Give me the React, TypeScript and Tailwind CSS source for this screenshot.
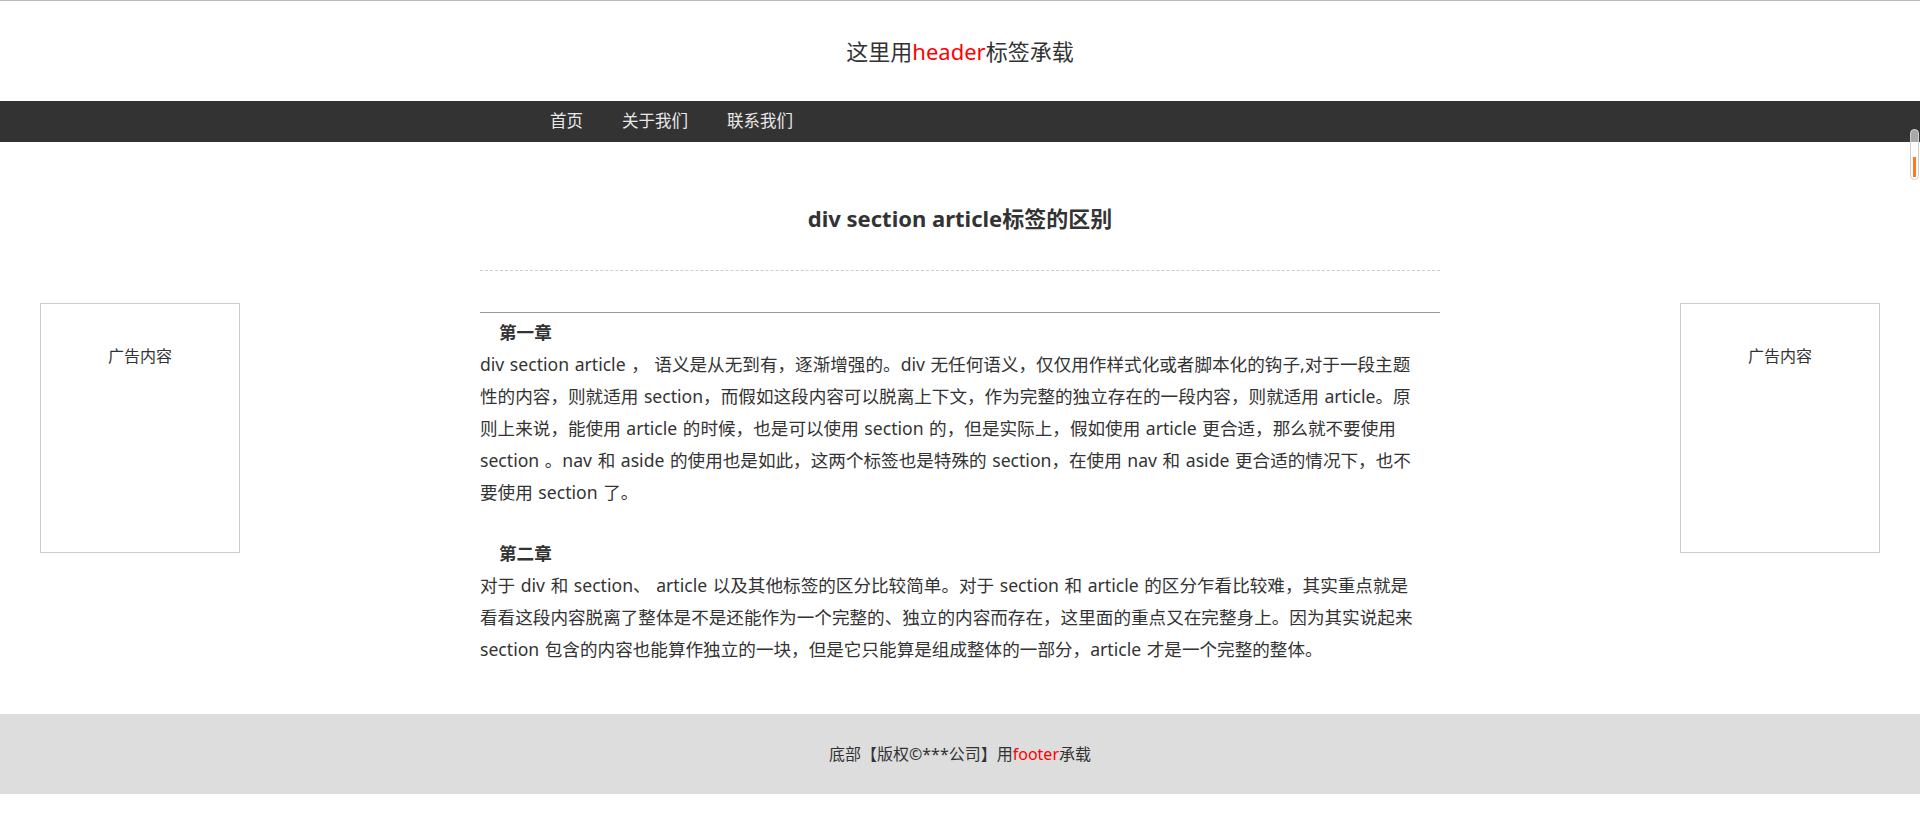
import React from "react";

const ch1 = [
  "div section article ， 语义是从无到有，逐渐增强的。div 无任何语义，仅仅用作样式化或者脚本化的钩子,对于一段主题",
  "性的内容，则就适用 section，而假如这段内容可以脱离上下文，作为完整的独立存在的一段内容，则就适用 article。原",
  "则上来说，能使用 article 的时候，也是可以使用 section 的，但是实际上，假如使用 article 更合适，那么就不要使用",
  "section 。nav 和 aside 的使用也是如此，这两个标签也是特殊的 section，在使用 nav 和 aside 更合适的情况下，也不",
  "要使用 section 了。",
];

const ch2 = [
  "对于 div 和 section、 article 以及其他标签的区分比较简单。对于 section 和 article 的区分乍看比较难，其实重点就是",
  "看看这段内容脱离了整体是不是还能作为一个完整的、独立的内容而存在，这里面的重点又在完整身上。因为其实说起来",
  "section 包含的内容也能算作独立的一块，但是它只能算是组成整体的一部分，article 才是一个完整的整体。",
];

function Ad() {
  return (
    <div className="mt-[161px] h-[250px] w-[200px] shrink-0 self-start border border-[#cccccc] bg-white pt-10 text-center text-[16px] leading-[24px] text-[#333333]">
      广告内容
    </div>
  );
}

function Chapter({ title, lines, className }: { title: string; lines: string[]; className?: string }) {
  return (
    <section className={className}>
      <h3 className="pl-[19px] text-[17.6px] font-bold leading-[32px] text-[#333333]">{title}</h3>
      <div className="text-[17.6px] leading-[32px] text-[#333333] [word-spacing:1px]">
        {lines.map((l, i) => (
          <p key={i} className="whitespace-pre">
            {l}
          </p>
        ))}
      </div>
    </section>
  );
}

export default function App() {
  return (
    <div className="relative min-h-[823px] bg-white font-['Noto_Sans','Noto_Sans_CJK_SC',sans-serif] text-[#333333]">
      <header className="flex h-[101px] items-center justify-center border-t border-[#bbbbbb] text-[22px] leading-[32px] text-[#333333]">
        <span>
          这里用<span className="text-[#ff0000]">header</span>标签承载
        </span>
      </header>

      <nav className="h-[41px] bg-[#333333]">
        <ul className="mx-auto flex h-full w-[960px] items-center gap-[39px] pl-[70px] text-[16.5px] text-[#e8e8e8]">
          <li>首页</li>
          <li>关于我们</li>
          <li>联系我们</li>
        </ul>
      </nav>

      <div className="flex justify-between px-10">
        <Ad />
        <main className="w-[960px] pb-[49px] pt-[60px]">
          <h2 className="border-b border-dashed border-[#cccccc] pb-[36px] text-center text-[22px] font-bold leading-[32px] text-[#333333]">
            div section article标签的区别
          </h2>
          <article className="mt-[41px] border-t border-[#999999] pt-[3px]">
            <Chapter title="第一章" lines={ch1} />
            <Chapter title="第二章" lines={ch2} className="mt-[29px]" />
          </article>
        </main>
        <Ad />
      </div>

      <footer className="flex h-[80px] items-center justify-center bg-[#dddddd] text-[16px] text-[#333333]">
        <span>
          底部【版权©***公司】用<span className="text-[#ff0000]">footer</span>承载
        </span>
      </footer>

      <div className="absolute right-[1px] top-[129px] h-[51px] w-[9px] overflow-hidden rounded-full border border-[#d0d0d0] bg-white">
        <div className="h-[12px] w-full bg-[#a8a8a8]" />
        <div className="mx-auto mt-[15px] h-[20px] w-[3px] bg-[#ff7a1a]" />
      </div>
    </div>
  );
}
